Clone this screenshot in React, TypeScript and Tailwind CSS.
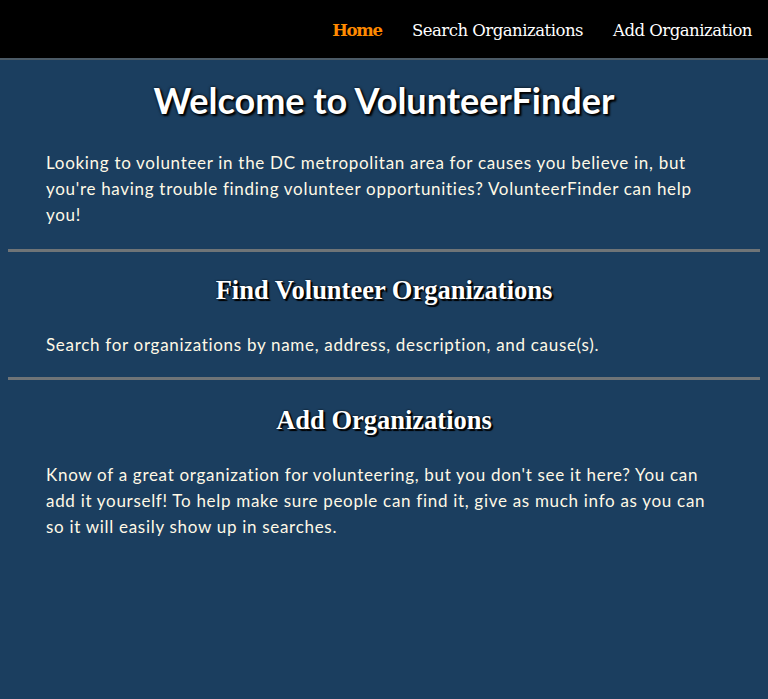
export default function App() {
  const links = [
    { label: "Home", active: true },
    { label: "Search Organizations", active: false },
    { label: "Add Organization", active: false },
  ];

  return (
    <div className="min-h-[699px] bg-[#1b3e5f] flex flex-col">
      {/* Top navigation */}
      <nav className="h-[60px] pt-[4px] bg-black border-b-2 border-[#4b5a66] flex items-center justify-end pr-4 gap-[30px] font-['DejaVu_Serif',serif] text-[16.5px]">
        {links.map((l) => (
          <a
            key={l.label}
            href="#"
            className={
              l.active
                ? "text-[#ff8a00] font-bold tracking-[-1.2px]"
                : "text-white tracking-[-0.5px]"
            }
          >
            {l.label}
          </a>
        ))}
      </nav>

      <main className="px-2 text-[#fff9e6] font-['Lato',sans-serif]">
        <h1 className="mt-[13px] text-center text-[36px] font-bold text-white font-['Lato',sans-serif] [text-shadow:0_0_3px_#000,2px_2px_2px_#000]">
          Welcome to VolunteerFinder
        </h1>
        <p className="mt-[23px] px-[38px] text-[17px] leading-[26px] tracking-[0.7px]">
          Looking to volunteer in the DC metropolitan area for causes you
          believe in, but you're having trouble finding volunteer
          opportunities? VolunteerFinder can help you!
        </p>

        <hr className="mt-[21px] border-0 h-[3px] bg-[#6f7477]" />

        <h2 className="mt-[19px] text-center text-[26.5px] font-bold text-white font-['Liberation_Serif',serif] [text-shadow:0_0_2px_#000,2px_2px_1px_#000]">
          Find Volunteer Organizations
        </h2>
        <p className="mt-[21px] px-[38px] text-[17px] leading-[26px] tracking-[0.7px]">
          Search for organizations by name, address, description, and
          cause(s).
        </p>

        <hr className="mt-[19px] border-0 h-[3px] bg-[#6f7477]" />

        <h2 className="mt-[21px] text-center text-[26.5px] font-bold text-white font-['Liberation_Serif',serif] [text-shadow:0_0_2px_#000,2px_2px_1px_#000]">
          Add Organizations
        </h2>
        <p className="mt-[21px] px-[38px] text-[17px] leading-[26px] tracking-[0.7px]">
          Know of a great organization for volunteering, but you don't see it
          here? You can add it yourself! To help make sure people can find it,
          give as much info as you can so it will easily show up in searches.
        </p>
      </main>
    </div>
  );
}
